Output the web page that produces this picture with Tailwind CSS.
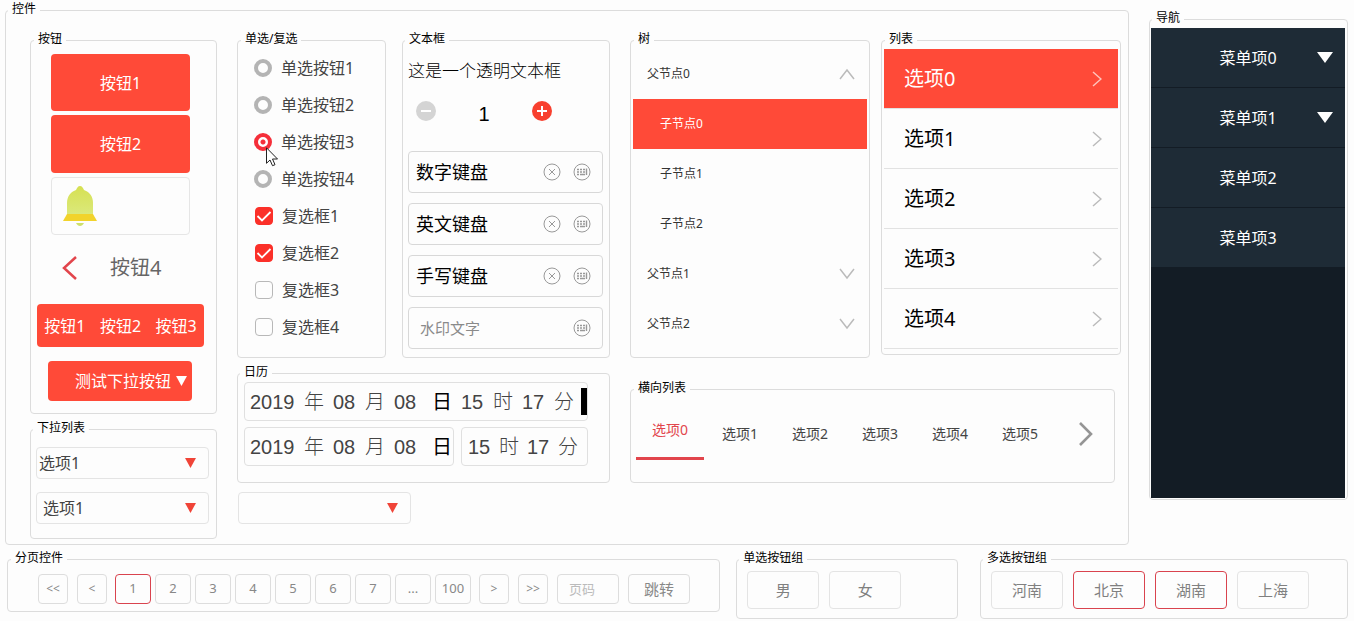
<!DOCTYPE html>
<html lang="zh-CN">
<head>
    <meta charset="UTF-8">
    <meta name="viewport" content="width=device-width, initial-scale=1">
    <title>控件</title>
    <script src="https://cdn.jsdelivr.net/npm/@tailwindcss/browser@4"></script>
</head>

<body class="bg-[#fdfdfd] font-['Noto_Sans','Noto_Sans_CJK_SC',sans-serif] text-base text-[#444]">

<!-- shared icons -->
<svg class="hidden">
    <symbol id="down" viewBox="0 0 12 11"><path d="M0 0h12L6 11z" fill="currentColor"/></symbol>
    <symbol id="chevron-right" viewBox="0 0 10 16"><path d="M1 1l8 7-8 7" fill="none" stroke="currentColor" stroke-width="1.5"/></symbol>
    <symbol id="chevron-down" viewBox="0 0 16 12"><path d="M1 1l7 9 7-9" fill="none" stroke="currentColor" stroke-width="1.5"/></symbol>
    <symbol id="chevron-up" viewBox="0 0 16 12"><path d="M1 11l7-9 7 9" fill="none" stroke="currentColor" stroke-width="1.5"/></symbol>
    <symbol id="tick" viewBox="0 0 18 18"><path d="M2.500 9l4.500 4.500L15.500 5" fill="none" stroke="currentColor" stroke-width="1.8"/></symbol>
    <symbol id="clear" viewBox="0 0 18 18">
        <circle cx="9" cy="9" r="8" fill="none" stroke="currentColor"/>
        <path d="M6 6l6 6M12 6l-6 6" stroke="currentColor"/>
    </symbol>
    <symbol id="keyboard" viewBox="0 0 18 18">
        <circle cx="9" cy="9" r="8" fill="none" stroke="currentColor"/>
        <path d="M4 6.500h2M7 6.500h2M10 6.500h2M4 9h2M7 9h2M10 9h2M4 11.500h2M7 11.500h5M13.500 5.500v6.500" fill="none" stroke="currentColor" stroke-width="1.4"/>
    </symbol>
</svg>

<div class="flex items-start gap-5 pt-0.5 pl-[5px] pr-[6px]">

    <fieldset class="flex-1 min-w-0 border border-[#dcdcdc] rounded">
        <legend class="ml-0.5 px-1 pb-1 text-xs leading-[13px] text-black">控件</legend>

        <div class="grid grid-cols-[187fr_373fr_491fr] gap-5 pt-[13px] pl-6 pr-[7px] pb-[5px]">

            <!-- buttons + dropdowns -->
            <div class="flex flex-col gap-[7px]">
                <fieldset class="min-w-0 border border-[#dcdcdc] rounded">
                    <legend class="ml-[3px] px-1 pb-1 text-xs leading-[13px] text-black">按钮</legend>
                    <div class="flex flex-col gap-1 pt-[5px] pl-5 pr-[26px]">
                        <button class="h-[57px] rounded bg-[#ff4a38] text-white">按钮1</button>
                        <button class="h-[58px] rounded bg-[#ff4a38] text-white">按钮2</button>
                        <button class="flex items-center h-[58px] pl-[11px] rounded border border-[#e6e6e6]" aria-label="提醒">
                            <svg class="w-[34px] h-10" viewBox="0 0 34 40">
                                <defs>
                                    <linearGradient id="bell" x1="0" y1="0" x2="0" y2="1">
                                        <stop offset="0" stop-color="#d6e052"/>
                                        <stop offset="1" stop-color="#dbe97c"/>
                                    </linearGradient>
                                </defs>
                                <path d="M13 37h8c-1 2-2.500 3-4 3s-3-1-4-3z" fill="#cfe06a"/>
                                <path d="M17 0c2 0 3 2 4 4 6 2 9 7 9 13v12H4V17c0-6 3-11 9-13 1-2 2-4 4-4z" fill="url(#bell)"/>
                                <path d="M4 28h26l4 7H0z" fill="#f2d32c"/>
                            </svg>
                        </button>
                        <button class="flex items-center h-[58px] pl-[11px] text-xl text-[#666]">
                            <svg class="w-4 h-6 mr-8" viewBox="0 0 16 24"><path d="M14 1L2 12l12 11" fill="none" stroke="#e2454c" stroke-width="2.500"/></svg>
                            按钮4
                        </button>
                    </div>
                    <div class="flex mt-[7px] ml-1.5 mr-3 h-[43px] rounded bg-[#ff4a38] text-white">
                        <button class="flex-1">按钮1</button>
                        <button class="flex-1">按钮2</button>
                        <button class="flex-1">按钮3</button>
                    </div>
                    <div class="mt-[14px] mb-3 ml-[17px] mr-6">
                        <button class="flex w-full h-10 items-center justify-end gap-[5px] pr-[5px] rounded bg-[#ff4a38] text-white">
                            测试下拉按钮
                            <svg class="w-[11px] h-2.5"><use href="#down"/></svg>
                        </button>
                    </div>
                </fieldset>

                <fieldset class="min-w-0 border border-[#dcdcdc] rounded">
                    <legend class="ml-0.5 px-1 pb-1 text-xs leading-[13px] text-black">下拉列表</legend>
                    <div class="flex flex-col gap-[13px] pt-[9px] pl-[5px] pr-[7px] pb-[14px]">
                        <div class="relative">
                            <select class="block w-full h-8 pl-0.5 appearance-none rounded-sm border border-[#e4e4e4]" aria-label="下拉列表1">
                                <option>选项1</option>
                                <option>选项2</option>
                            </select>
                            <svg class="absolute right-[13px] top-[11px] w-[11px] h-2.5 text-[#f04438] pointer-events-none"><use href="#down"/></svg>
                        </div>
                        <div class="relative">
                            <select class="block w-full h-8 pl-1.5 appearance-none rounded-sm border border-[#e4e4e4]" aria-label="下拉列表2">
                                <option>选项1</option>
                                <option>选项2</option>
                            </select>
                            <svg class="absolute right-[13px] top-[11px] w-[11px] h-2.5 text-[#f04438] pointer-events-none"><use href="#down"/></svg>
                        </div>
                    </div>
                </fieldset>
            </div>

            <!-- radios, text boxes, calendar -->
            <div>
                <div class="grid grid-cols-[149fr_208fr] gap-4">
                    <fieldset class="relative min-w-0 border border-[#dcdcdc] rounded">
                        <legend class="ml-[3px] px-1 pb-1 text-xs leading-[13px] text-black">单选/复选</legend>
                        <div class="flex flex-col pl-4 pb-3">
                            <label class="flex items-center gap-[9px] h-[37px]">
                                <input type="radio" name="radio" class="appearance-none size-[18px] rounded-full border-4 border-[#b4b4b4] checked:border-[#f52f3a] checked:bg-[radial-gradient(circle,#f52f3a_2px,#fff_3px)]">
                                单选按钮1
                            </label>
                            <label class="flex items-center gap-[9px] h-[37px]">
                                <input type="radio" name="radio" class="appearance-none size-[18px] rounded-full border-4 border-[#b4b4b4] checked:border-[#f52f3a] checked:bg-[radial-gradient(circle,#f52f3a_2px,#fff_3px)]">
                                单选按钮2
                            </label>
                            <label class="flex items-center gap-[9px] h-[37px]">
                                <input type="radio" name="radio" checked class="appearance-none size-[18px] rounded-full border-4 border-[#b4b4b4] checked:border-[#f52f3a] checked:bg-[radial-gradient(circle,#f52f3a_2px,#fff_3px)]">
                                单选按钮3
                            </label>
                            <label class="flex items-center gap-[9px] h-[37px]">
                                <input type="radio" name="radio" class="appearance-none size-[18px] rounded-full border-4 border-[#b4b4b4] checked:border-[#f52f3a] checked:bg-[radial-gradient(circle,#f52f3a_2px,#fff_3px)]">
                                单选按钮4
                            </label>
                            <label class="flex items-center gap-[9px] h-[37px] pl-px">
                                <span class="grid">
                                    <input type="checkbox" checked class="col-start-1 row-start-1 appearance-none size-[18px] rounded border border-[#b8b8b8] checked:border-[#fb3029] checked:bg-[#fb3029]">
                                    <svg class="col-start-1 row-start-1 size-[18px] text-white pointer-events-none"><use href="#tick"/></svg>
                                </span>
                                复选框1
                            </label>
                            <label class="flex items-center gap-[9px] h-[37px] pl-px">
                                <span class="grid">
                                    <input type="checkbox" checked class="col-start-1 row-start-1 appearance-none size-[18px] rounded border border-[#b8b8b8] checked:border-[#fb3029] checked:bg-[#fb3029]">
                                    <svg class="col-start-1 row-start-1 size-[18px] text-white pointer-events-none"><use href="#tick"/></svg>
                                </span>
                                复选框2
                            </label>
                            <label class="flex items-center gap-[9px] h-[37px] pl-px">
                                <input type="checkbox" class="appearance-none size-[18px] rounded border border-[#b8b8b8] checked:border-[#fb3029] checked:bg-[#fb3029]">
                                复选框3
                            </label>
                            <label class="flex items-center gap-[9px] h-[37px] pl-px">
                                <input type="checkbox" class="appearance-none size-[18px] rounded border border-[#b8b8b8] checked:border-[#fb3029] checked:bg-[#fb3029]">
                                复选框4
                            </label>
                        </div>
                        <!-- mouse pointer -->
                        <svg class="absolute left-7 top-[98px] w-3 h-5 pointer-events-none" viewBox="0 0 12 20"><path d="M.5.800v15.500l3.500-3.300 2.500 5.700 2.500-1-2.500-5.700h5z" fill="#fff" stroke="#222"/></svg>
                    </fieldset>

                    <fieldset class="min-w-0 border border-[#dcdcdc] rounded">
                        <legend class="ml-0.5 px-1 pb-1 text-xs leading-[13px] text-black">文本框</legend>
                        <div class="pl-[5px] pr-1.5 pb-2">
                            <input type="text" value="这是一个透明文本框" aria-label="透明文本框" class="block w-full h-10 bg-transparent text-[17px] font-light text-black">
                            <div class="flex items-center h-10 mt-0.5 pl-2">
                                <button aria-label="减少"><svg class="size-5" viewBox="0 0 20 20"><circle cx="10" cy="10" r="10" fill="#d4d4d4"/><path d="M5 10h10" stroke="#fff" stroke-width="2"/></svg></button>
                                <input type="text" value="1" aria-label="数量" class="w-24 h-10 pt-1.5 text-center text-xl font-['Liberation_Sans',sans-serif] text-black">
                                <button aria-label="增加"><svg class="size-5" viewBox="0 0 20 20"><circle cx="10" cy="10" r="10" fill="#f8402f"/><path d="M5 10h10M10 5v10" stroke="#fff" stroke-width="2"/></svg></button>
                            </div>
                            <div class="flex flex-col gap-2.5 pt-5">
                                <div class="flex items-center gap-3 h-[42px] pl-[7px] pr-[11px] rounded-sm border border-[#d8d8d8] text-[#999]">
                                    <input type="text" value="数字键盘" aria-label="数字键盘" class="flex-1 min-w-0 text-lg text-black">
                                    <button aria-label="清除"><svg class="size-[18px]"><use href="#clear"/></svg></button>
                                    <button aria-label="键盘"><svg class="size-[18px]"><use href="#keyboard"/></svg></button>
                                </div>
                                <div class="flex items-center gap-3 h-[42px] pl-[7px] pr-[11px] rounded-sm border border-[#d8d8d8] text-[#999]">
                                    <input type="text" value="英文键盘" aria-label="英文键盘" class="flex-1 min-w-0 text-lg text-black">
                                    <button aria-label="清除"><svg class="size-[18px]"><use href="#clear"/></svg></button>
                                    <button aria-label="键盘"><svg class="size-[18px]"><use href="#keyboard"/></svg></button>
                                </div>
                                <div class="flex items-center gap-3 h-[42px] pl-[7px] pr-[11px] rounded-sm border border-[#d8d8d8] text-[#999]">
                                    <input type="text" value="手写键盘" aria-label="手写键盘" class="flex-1 min-w-0 text-lg text-black">
                                    <button aria-label="清除"><svg class="size-[18px]"><use href="#clear"/></svg></button>
                                    <button aria-label="键盘"><svg class="size-[18px]"><use href="#keyboard"/></svg></button>
                                </div>
                                <div class="flex items-center gap-3 h-[42px] pl-[11px] pr-[11px] rounded-sm border border-[#d8d8d8] text-[#999]">
                                    <input type="text" placeholder="水印文字" aria-label="水印文字" class="flex-1 min-w-0 text-[15px] placeholder:text-[#8a8a8a]">
                                    <button aria-label="键盘"><svg class="size-[18px]"><use href="#keyboard"/></svg></button>
                                </div>
                            </div>
                        </div>
                    </fieldset>
                </div>

                <fieldset class="min-w-0 mt-[7px] border border-[#dcdcdc] rounded">
                    <legend class="ml-0.5 px-1 pb-1 text-xs leading-[13px] text-black">日历</legend>
                    <div class="flex flex-col gap-1.5 pl-1.5 pr-[21px] pb-4 text-xl font-['Liberation_Sans','Noto_Sans_CJK_SC',sans-serif]">
                        <div class="flex items-center gap-[9px] h-[39px] pl-[5px] rounded-sm border border-[#e0e0e0]">
                            <input type="text" value="2019" aria-label="年" class="w-[45px]"><span class="font-light">年</span>
                            <input type="text" value="08" aria-label="月" class="w-[23px]"><span class="font-light">月</span>
                            <input type="text" value="08" aria-label="日" class="w-[23px]"><span class="ml-1.5 text-black">日</span>
                            <input type="text" value="15" aria-label="时" class="w-[23px]"><span class="font-light">时</span>
                            <input type="text" value="17" aria-label="分" class="w-[23px]"><span class="font-light">分</span>
                            <span class="-ml-0.5 w-1.5 h-[27px] shrink-0 bg-black"></span>
                        </div>
                        <div class="flex gap-[7px]">
                            <div class="flex items-center gap-[9px] w-[210px] h-[39px] pl-[5px] rounded-sm border border-[#e0e0e0]">
                                <input type="text" value="2019" aria-label="年" class="w-[45px]"><span class="font-light">年</span>
                                <input type="text" value="08" aria-label="月" class="w-[23px]"><span class="font-light">月</span>
                                <input type="text" value="08" aria-label="日" class="w-[23px]"><span class="ml-1.5 text-black">日</span>
                            </div>
                            <div class="flex flex-1 items-center gap-2 h-[39px] pl-1.5 rounded-sm border border-[#e0e0e0]">
                                <input type="text" value="15" aria-label="时" class="w-[23px]"><span class="font-light">时</span>
                                <input type="text" value="17" aria-label="分" class="w-[23px]"><span class="font-light">分</span>
                            </div>
                        </div>
                    </div>
                </fieldset>

                <div class="relative mt-[9px] ml-px w-[173px]">
                    <select class="block w-full h-8 appearance-none rounded-sm border border-[#e4e4e4]" aria-label="空下拉列表"></select>
                    <svg class="absolute right-[13px] top-[11px] w-[11px] h-2.5 text-[#f04438] pointer-events-none"><use href="#down"/></svg>
                </div>
            </div>

            <!-- tree, list, tabs -->
            <div>
                <div class="grid grid-cols-2 items-start gap-[11px]">
                    <fieldset class="min-w-0 border border-[#dcdcdc] rounded">
                        <legend class="ml-[3px] px-1 pb-1 text-xs leading-[13px] text-black">树</legend>
                        <div class="flex flex-col px-0.5 pb-2 text-xs text-[#333]">
                            <button class="flex items-center justify-between h-[50px] pl-[14px] pr-3">父节点0<svg class="w-4 h-3 text-[#bbb]"><use href="#chevron-up"/></svg></button>
                            <button class="h-[50px] pl-[27px] text-left bg-[#ff4a38] text-white">子节点0</button>
                            <button class="h-[50px] pl-[27px] text-left">子节点1</button>
                            <button class="h-[50px] pl-[27px] text-left">子节点2</button>
                            <button class="flex items-center justify-between h-[50px] pl-[14px] pr-3">父节点1<svg class="w-4 h-3 text-[#bbb]"><use href="#chevron-down"/></svg></button>
                            <button class="flex items-center justify-between h-[50px] pl-[14px] pr-3">父节点2<svg class="w-4 h-3 text-[#bbb]"><use href="#chevron-down"/></svg></button>
                        </div>
                    </fieldset>

                    <fieldset class="min-w-0 border border-[#dcdcdc] rounded">
                        <legend class="ml-[3px] px-1 pb-1 text-xs leading-[13px] text-black">列表</legend>
                        <div class="flex flex-col px-0.5 pb-[5px] text-xl text-black">
                            <button class="flex items-center justify-between h-[60px] pl-5 pr-4 border-b border-[#e2e2e2] bg-clip-padding bg-[#ff4a38] text-white">选项0<svg class="w-2.5 h-4 text-[#ffc4bc]"><use href="#chevron-right"/></svg></button>
                            <button class="flex items-center justify-between h-[60px] pl-5 pr-4 border-b border-[#e2e2e2]">选项1<svg class="w-2.5 h-4 text-[#bbb]"><use href="#chevron-right"/></svg></button>
                            <button class="flex items-center justify-between h-[60px] pl-5 pr-4 border-b border-[#e2e2e2]">选项2<svg class="w-2.5 h-4 text-[#bbb]"><use href="#chevron-right"/></svg></button>
                            <button class="flex items-center justify-between h-[60px] pl-5 pr-4 border-b border-[#e2e2e2]">选项3<svg class="w-2.5 h-4 text-[#bbb]"><use href="#chevron-right"/></svg></button>
                            <button class="flex items-center justify-between h-[60px] pl-5 pr-4 border-b border-[#e2e2e2]">选项4<svg class="w-2.5 h-4 text-[#bbb]"><use href="#chevron-right"/></svg></button>
                        </div>
                    </fieldset>
                </div>

                <fieldset class="min-w-0 mt-[23px] mr-1.5 border border-[#dcdcdc] rounded">
                    <legend class="ml-[3px] px-1 pb-1 text-xs leading-[13px] text-black">横向列表</legend>
                    <div class="flex items-center pt-[9px] pl-1 pr-5 pb-[22px] text-sm">
                        <button class="w-[70px] h-[53px] px-px text-[#e2454c]"><span class="flex items-center justify-center h-full pb-1 border-b-3 border-[#e2454c]">选项0</span></button>
                        <button class="w-[70px] h-[53px]">选项1</button>
                        <button class="w-[70px] h-[53px]">选项2</button>
                        <button class="w-[70px] h-[53px]">选项3</button>
                        <button class="w-[70px] h-[53px]">选项4</button>
                        <button class="w-[70px] h-[53px]">选项5</button>
                        <button class="ml-auto" aria-label="下一页"><svg class="w-4 h-6" viewBox="0 0 16 24"><path d="M2 1l11 11L2 23" fill="none" stroke="#959595" stroke-width="2.600"/></svg></button>
                    </div>
                </fieldset>
            </div>
        </div>
    </fieldset>

    <fieldset class="w-[199px] min-w-0 mt-[9px] border border-[#dcdcdc] rounded">
        <legend class="ml-0.5 px-1 pb-1 text-xs leading-[13px] text-black">导航</legend>
        <nav class="flex flex-col ml-px mr-0.5 mb-px h-[470px] bg-[#131c25] text-white">
            <button class="relative h-[60px] border-b border-[#131c25] bg-[#1e2b36]">菜单项0<svg class="absolute right-3 top-6 w-4 h-[11px]" viewBox="0 0 16 11"><path d="M0 0h16L8 11z" fill="currentColor"/></svg></button>
            <button class="relative h-[60px] border-b border-[#131c25] bg-[#1e2b36]">菜单项1<svg class="absolute right-3 top-6 w-4 h-[11px]" viewBox="0 0 16 11"><path d="M0 0h16L8 11z" fill="currentColor"/></svg></button>
            <button class="h-[60px] border-b border-[#131c25] bg-[#1e2b36]">菜单项2</button>
            <button class="h-[60px] border-b border-[#131c25] bg-[#1e2b36]">菜单项3</button>
        </nav>
    </fieldset>
</div>

<div class="flex items-start pt-1.5 pl-[7px] pr-1.5">
    <fieldset class="flex-[715] min-w-0 border border-[#dcdcdc] rounded">
        <legend class="ml-[3px] px-1 pb-1 text-xs leading-[13px] text-black">分页控件</legend>
        <div class="flex gap-[9px] pt-1.5 pb-[7px] pl-[30px] text-[13px] text-[#888]">
            <button class="w-[30px] h-[30px] rounded-sm border border-[#ddd] text-xs">&lt;&lt;</button>
            <button class="w-[30px] h-[30px] rounded-sm border border-[#ddd] text-xs">&lt;</button>
            <div class="flex gap-1 -mx-px">
                <button class="w-9 h-[30px] rounded-sm border border-[#d9434e]">1</button>
                <button class="w-9 h-[30px] rounded-sm border border-[#ddd]">2</button>
                <button class="w-9 h-[30px] rounded-sm border border-[#ddd]">3</button>
                <button class="w-9 h-[30px] rounded-sm border border-[#ddd]">4</button>
                <button class="w-9 h-[30px] rounded-sm border border-[#ddd]">5</button>
                <button class="w-9 h-[30px] rounded-sm border border-[#ddd]">6</button>
                <button class="w-9 h-[30px] rounded-sm border border-[#ddd]">7</button>
                <button class="w-9 h-[30px] rounded-sm border border-[#ddd]">...</button>
                <button class="w-9 h-[30px] rounded-sm border border-[#ddd]">100</button>
            </div>
            <button class="w-[30px] h-[30px] rounded-sm border border-[#ddd] text-xs">&gt;</button>
            <button class="w-[30px] h-[30px] rounded-sm border border-[#ddd] text-xs">&gt;&gt;</button>
            <input type="text" placeholder="页码" aria-label="页码" class="w-[62px] h-[30px] pl-[11px] rounded-sm border border-[#ddd] placeholder:text-[#bbb]">
            <button class="w-[62px] h-[30px] rounded-sm border border-[#ddd] text-[15px]">跳转</button>
        </div>
    </fieldset>

    <fieldset class="flex-[221] min-w-0 ml-4 mr-[22px] border border-[#dcdcdc] rounded">
        <legend class="ml-0.5 px-1 pb-1 text-xs leading-[13px] text-black">单选按钮组</legend>
        <div class="flex gap-2.5 pt-[3px] pb-[9px] pl-2.5 text-[15px] text-[#808080]">
            <label class="relative flex items-center justify-center w-[72px] h-[38px] rounded-sm border border-[#e4e4e4] has-checked:border-[#d9434e]"><input type="radio" name="sex" class="sr-only">男</label>
            <label class="relative flex items-center justify-center w-[72px] h-[38px] rounded-sm border border-[#e4e4e4] has-checked:border-[#d9434e]"><input type="radio" name="sex" class="sr-only">女</label>
        </div>
    </fieldset>

    <fieldset class="flex-[368] min-w-0 border border-[#dcdcdc] rounded">
        <legend class="ml-0.5 px-1 pb-1 text-xs leading-[13px] text-black">多选按钮组</legend>
        <div class="flex gap-2.5 pt-[3px] pb-[9px] pl-2.5 text-[15px] text-[#808080]">
            <label class="relative flex items-center justify-center w-[72px] h-[38px] rounded-sm border border-[#e4e4e4] has-checked:border-[#d9434e]"><input type="checkbox" class="sr-only">河南</label>
            <label class="relative flex items-center justify-center w-[72px] h-[38px] rounded-sm border border-[#e4e4e4] has-checked:border-[#d9434e]"><input type="checkbox" checked class="sr-only">北京</label>
            <label class="relative flex items-center justify-center w-[72px] h-[38px] rounded-sm border border-[#e4e4e4] has-checked:border-[#d9434e]"><input type="checkbox" checked class="sr-only">湖南</label>
            <label class="relative flex items-center justify-center w-[72px] h-[38px] rounded-sm border border-[#e4e4e4] has-checked:border-[#d9434e]"><input type="checkbox" class="sr-only">上海</label>
        </div>
    </fieldset>
</div>

</body>
</html>
